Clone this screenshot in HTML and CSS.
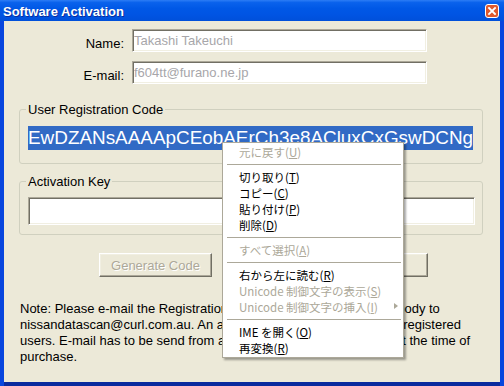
FILE: index.html
```html
<!DOCTYPE html>
<html>
<head>
<meta charset="utf-8">
<link rel="stylesheet" href="styles.css">
</head>
<body>
<div class="window">
  <div class="titlebar">
    <span class="title">Software Activation</span>
    <span class="close"><svg width="14" height="14" viewBox="0 0 14 14"><rect x="0.5" y="0.5" width="13" height="13" rx="2.5" fill="#E0582C" stroke="#FFFFFF"/><path d="M4 4 L10 10 M10 4 L4 10" stroke="#FFFFFF" stroke-width="1.8" stroke-linecap="square"/></svg></span>
  </div>
  <div class="client">
    <div class="row"><label class="lbl">Name:</label><div class="edit">Takashi Takeuchi</div></div>
    <div class="row"><label class="lbl">E-mail:</label><div class="edit">f604tt@furano.ne.jp</div></div>
    <fieldset class="group g1">
      <legend>User Registration Code</legend>
      <div class="code"><span class="sel">EwDZANsAAAApCEobAErCh3e8ACluxCxGswDCNg</span></div>
    </fieldset>
    <fieldset class="group g2">
      <legend>Activation Key</legend>
      <div class="edit key"></div>
    </fieldset>
    <div class="buttons">
      <button class="btn" disabled>Generate Code</button>
      <button class="btn">Activate</button>
    </div>
    <p class="note">Note: Please e-mail the Registration Code above in the message body to<br>nissandatascan@curl.com.au. An activation key will be sent out to registered<br>users. E-mail has to be send from an e-mail address that is used at the time of<br>purchase.</p>
  </div>
  <div class="menu">
    <div class="item dis">元に戻す(<u>U</u>)</div>
    <div class="sep"></div>
    <div class="item">切り取り(<u>T</u>)</div>
    <div class="item">コピー(<u>C</u>)</div>
    <div class="item">貼り付け(<u>P</u>)</div>
    <div class="item">削除(<u>D</u>)</div>
    <div class="sep"></div>
    <div class="item dis">すべて選択(<u>A</u>)</div>
    <div class="sep"></div>
    <div class="item">右から左に読む(<u>R</u>)</div>
    <div class="item dis">Unicode 制御文字の表示(<u>S</u>)</div>
    <div class="item dis sub">Unicode 制御文字の挿入(<u>I</u>)<span class="arrow"></span></div>
    <div class="sep"></div>
    <div class="item">IME を開く(<u>O</u>)</div>
    <div class="item">再変換(<u>R</u>)</div>
  </div>
</div>
</body>
</html>
```
FILE: styles.css
```css
html, body {
  margin: 0;
  padding: 0;
}
body {
  width: 504px;
  height: 386px;
  overflow: hidden;
  font-family: "Liberation Sans", Arial, sans-serif;
  font-size: 13px;
  color: #000;
}
.window {
  position: relative;
  width: 504px;
  height: 386px;
  display: flex;
  flex-direction: column;
  background: #0846DE;
}
.titlebar {
  height: 21px;
  flex: none;
  display: flex;
  align-items: center;
  justify-content: space-between;
  padding: 0 5px 0 3px;
  background: linear-gradient(to bottom, #2C7DF5 0%, #0A62EC 12%, #0058E6 40%, #0054E3 70%, #0050DA 100%);
}
.title {
  color: #fff;
  font-weight: bold;
  font-size: 13px;
  text-shadow: 1px 1px 0 #0A2E9E;
  padding-top: 1px;
}
.close {
  display: flex;
  width: 14px;
  height: 14px;
  margin-top: 1px;
}
.client {
  flex: 1;
  margin: 0 4px 4px 4px;
  background: #ECE9D8;
  padding-top: 8px;
  display: flex;
  flex-direction: column;
  box-shadow: 0 4px 0 #0A2A9E;
}
.row {
  display: flex;
  align-items: flex-start;
  gap: 8px;
}
.row + .row {
  margin-top: 9px;
}
.lbl {
  width: 120px;
  text-align: right;
  line-height: 15px;
  padding-top: 7px;
}
.edit {
  box-sizing: border-box;
  width: 295px;
  height: 23px;
  background: #fff;
  border: 1px solid;
  border-color: #ACA899 #FFFFFF #FFFFFF #ACA899;
  box-shadow: inset 1px 1px 0 #716F64, inset -1px -1px 0 #F1EFE2;
  color: #A7A6AA;
  line-height: 21px;
  padding-left: 1px;
}
.group {
  margin: 18px 17px 0 15px;
  padding: 9px 7px 13px 8px;
  border: 1px solid #D0D0BF;
  border-radius: 3px;
  min-width: 0;
}
.group legend {
  padding: 0 2px;
  margin-left: -2px;
  line-height: 15px;
}
.g2 {
  margin-top: 10px;
  padding-top: 8px;
  padding-bottom: 9px;
}
.code {
  height: 24px;
  white-space: nowrap;
}
.sel {
  display: inline-block;
  background: #316AC5;
  color: #fff;
  font-size: 18.9px;
  line-height: 24px;
  height: 24px;
}
.key {
  width: 100%;
  height: 28px;
}
.buttons {
  display: flex;
  gap: 103px;
  margin-top: 18px;
  padding-left: 95px;
}
.btn {
  box-sizing: border-box;
  width: 113px;
  height: 24px;
  background: #ECE9D8;
  border: 1px solid;
  border-color: #FFFFFF #716F64 #716F64 #FFFFFF;
  box-shadow: inset -1px -1px 0 #ACA899, inset 1px 1px 0 #F1EFE2;
  font-family: "Liberation Sans", Arial, sans-serif;
  font-size: 13px;
  color: #000;
  padding: 0;
}
.btn:disabled {
  color: #ACA899;
  text-shadow: 1px 1px 0 #FFFFFF;
}
.note {
  margin: 24px 0 0 16px;
  line-height: 16px;
  white-space: nowrap;
}
.menu {
  position: absolute;
  left: 222px;
  top: 142px;
  width: 180px;
  padding: 1px 0;
  background: #fff;
  border: 1px solid #ACA899;
  box-shadow: 2px 2px 2px rgba(0, 0, 0, 0.35);
  font-family: "Noto Sans CJK JP", sans-serif;
  font-size: 11.5px;
}
.item {
  position: relative;
  height: 16px;
  line-height: 16px;
  padding-left: 16px;
  white-space: nowrap;
  color: #000;
}
.item u {
  text-underline-offset: 1px;
}
.item.dis {
  color: #ACA899;
}
.sep {
  height: 1px;
  margin: 4px 2px 4px 4px;
  background: #ACA899;
}
.arrow {
  position: absolute;
  right: 5px;
  top: 4px;
  width: 0;
  height: 0;
  border-top: 3.5px solid transparent;
  border-bottom: 3.5px solid transparent;
  border-left: 4px solid #ACA899;
}
```
